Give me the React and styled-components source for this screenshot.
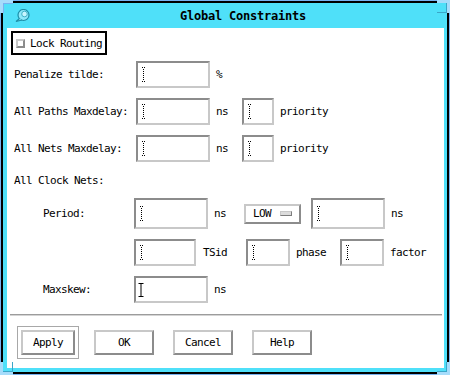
import React from 'react';
import styled, { createGlobalStyle, css } from 'styled-components';

const GlobalStyle = createGlobalStyle`
  body {
    margin: 0;
    background: #ffffff;
    font-family: "DejaVu Sans Mono", "Liberation Mono", monospace;
  }
`;

const CYAN = '#4fe0f9';
const LIGHT = '#c8c8c8';
const DARK = '#8c8c8c';

const Window = styled.div`
  position: relative;
  width: 450px;
  height: 375px;
  box-sizing: border-box;
  border: 1px solid #78b2f0;
  background: #000;
  padding: 2px;
`;

const Frame = styled.div`
  display: flex;
  flex-direction: column;
  height: 100%;
  box-sizing: border-box;
  background: ${CYAN};
  padding: 0 3px 4px 4px;
`;

const Corner = styled.div`
  position: absolute;
  width: 10px;
  height: 10px;
  border: 0 solid #a6dcfb;
  ${(p) => p.$top ? css`top: -1px; border-top-width: 3px;` : css`bottom: -1px; border-bottom-width: 3px;`}
  ${(p) => p.$left ? css`left: -1px; border-left-width: 3px;` : css`right: -1px; border-right-width: 3px;`}
  box-shadow: ${(p) => p.$top && p.$left ? 'inset 1px 1px 0 #78b2f0' : 'inset -1px -1px 0 #3aa6c8'};
`;

const TitleBar = styled.div`
  display: flex;
  align-items: center;
  height: 25px;
  padding-left: 8px;
`;

const TitleText = styled.div`
  flex: 1;
  text-align: center;
  padding-left: 12px;
  font-size: 12px;
  font-weight: bold;
  letter-spacing: -0.22px;
  color: #000;
`;

const Content = styled.div`
  flex: 1;
  display: flex;
  flex-direction: column;
  background: #fff;
  font-size: 11px;
  letter-spacing: -0.62px;
  color: #000;
`;

const LockBox = styled.div`
  display: flex;
  align-items: center;
  gap: 5px;
  box-sizing: border-box;
  width: 96px;
  height: 24px;
  margin: 3px 0 0 4px;
  padding-left: 3px;
  border: 2px solid #000;
`;

const Check = styled.span`
  width: 9px;
  height: 9px;
  box-sizing: border-box;
  border: 2px solid;
  border-color: ${LIGHT} ${DARK} ${DARK} ${LIGHT};
  background: #fff;
`;

const Row = styled.div`
  display: flex;
  align-items: center;
  height: ${(p) => p.$h || 27}px;
  margin-top: ${(p) => p.$mt}px;
  padding-left: ${(p) => p.$pl || 7}px;
`;

const Label = styled.span`
  width: ${(p) => p.$w}px;
  flex-shrink: 0;
`;

const Unit = styled.span`
  margin-left: ${(p) => p.$ml || 6}px;
`;

const Field = styled.div`
  display: flex;
  align-items: center;
  box-sizing: border-box;
  width: ${(p) => p.$w}px;
  height: ${(p) => p.$h || 27}px;
  margin-left: ${(p) => p.$ml || 0}px;
  padding-left: ${(p) => (p.$focus ? 2 : 3)}px;
  border: 2px solid;
  border-color: ${DARK} ${LIGHT} ${LIGHT} ${DARK};
  background: #fff;
`;

const Option = styled.div`
  display: flex;
  align-items: center;
  box-sizing: border-box;
  width: 57px;
  height: 20px;
  margin-left: 18px;
  padding-left: 7px;
  gap: 9px;
  border: 2px solid;
  border-color: ${LIGHT} ${DARK} ${DARK} ${LIGHT};
`;

const OptionMark = styled.span`
  width: 12px;
  height: 5px;
  box-sizing: border-box;
  border: 1px solid;
  border-color: ${LIGHT} #7c7c7c #7c7c7c ${LIGHT};
  background: #dcdcdc;
`;

const Divider = styled.div`
  height: 0;
  margin: 11px 2px 0 3px;
  border-top: 1px solid #9c9c9c;
  border-bottom: 1px solid #d4d4d4;
`;

const ButtonBar = styled.div`
  display: flex;
  align-items: center;
  gap: 19px;
  margin-top: 10px;
  padding-left: 10px;
`;

const DefaultRing = styled.div`
  padding: 3px;
  border: 1px solid #a8a8a8;
  margin-right: -4px;
`;

const Button = styled.div`
  display: flex;
  align-items: center;
  justify-content: center;
  box-sizing: border-box;
  width: ${(p) => p.$w || 60}px;
  height: 25px;
  border: 2px solid;
  border-color: ${LIGHT} ${DARK} ${DARK} ${LIGHT};
`;

function TitleIcon() {
  return (
    <svg width="15" height="13" viewBox="0 0 15 13">
      <circle cx="8.5" cy="6" r="5.5" fill="#8fe9fb" stroke="#1c8ea8" strokeWidth="1.2" />
      <circle cx="9.5" cy="5" r="2.8" fill="#c8f6ff" stroke="#3fb2c8" strokeWidth="1" />
      <path d="M4.5 9.5 L1 12.5 L7 11" fill="#8fe9fb" stroke="#1c8ea8" strokeWidth="1.1" />
    </svg>
  );
}

function Caret({ solid }) {
  if (solid) {
    return (
      <svg width="6" height="14" viewBox="0 0 6 14">
        <path d="M0.5 0.5 H5.5 M3 0.5 V13.5 M0.5 13.5 H5.5" stroke="#000" strokeWidth="1" />
      </svg>
    );
  }
  const dots = [];
  for (let y = 2; y <= 12; y += 2) dots.push(<rect key={y} x="2" y={y} width="1" height="1" />);
  return (
    <svg width="5" height="15" viewBox="0 0 5 15" fill="#000">
      <rect x="1" y="0" width="1" height="1" />
      <rect x="3" y="0" width="1" height="1" />
      {dots}
      <rect x="1" y="14" width="1" height="1" />
      <rect x="3" y="14" width="1" height="1" />
    </svg>
  );
}

function Input({ w, h, ml, focus }) {
  return (
    <Field $w={w} $h={h} $ml={ml} $focus={focus}>
      <Caret solid={focus} />
    </Field>
  );
}

export default function App() {
  return (
    <>
      <GlobalStyle />
      <Window>
        <Frame>
          <TitleBar>
            <TitleIcon />
            <TitleText>Global Constraints</TitleText>
          </TitleBar>
          <Content>
            <LockBox>
              <Check />
              <span>Lock Routing</span>
            </LockBox>

            <Row $mt={6}>
              <Label $w={122}>Penalize tilde:</Label>
              <Input w={74} />
              <Unit>%</Unit>
            </Row>

            <Row $mt={10}>
              <Label $w={122}>All Paths Maxdelay:</Label>
              <Input w={74} />
              <Unit>ns</Unit>
              <Input w={32} ml={14} />
              <Unit>priority</Unit>
            </Row>

            <Row $mt={10}>
              <Label $w={122}>All Nets Maxdelay:</Label>
              <Input w={74} />
              <Unit>ns</Unit>
              <Input w={32} ml={14} />
              <Unit>priority</Unit>
            </Row>

            <Row $mt={8} $h={20}>
              <Label $w={122}>All Clock Nets:</Label>
            </Row>

            <Row $mt={8} $h={31} $pl={36}>
              <Label $w={91}>Period:</Label>
              <Input w={74} h={31} />
              <Unit>ns</Unit>
              <Option>
                <span>LOW</span>
                <OptionMark />
              </Option>
              <Input w={74} h={31} ml={10} />
              <Unit>ns</Unit>
            </Row>

            <Row $mt={10} $pl={36}>
              <Label $w={91} />
              <Input w={62} />
              <Unit $ml={7}>TSid</Unit>
              <Input w={44} ml={19} />
              <Unit>phase</Unit>
              <Input w={44} ml={14} />
              <Unit>factor</Unit>
            </Row>

            <Row $mt={10} $pl={36}>
              <Label $w={91}>Maxskew:</Label>
              <Input w={74} focus />
              <Unit>ns</Unit>
            </Row>

            <Divider />

            <ButtonBar>
              <DefaultRing>
                <Button $w={54}>Apply</Button>
              </DefaultRing>
              <Button>OK</Button>
              <Button>Cancel</Button>
              <Button>Help</Button>
            </ButtonBar>
          </Content>
        </Frame>
        <Corner $top $left />
        <Corner $top />
        <Corner $left />
        <Corner />
      </Window>
    </>
  );
}
